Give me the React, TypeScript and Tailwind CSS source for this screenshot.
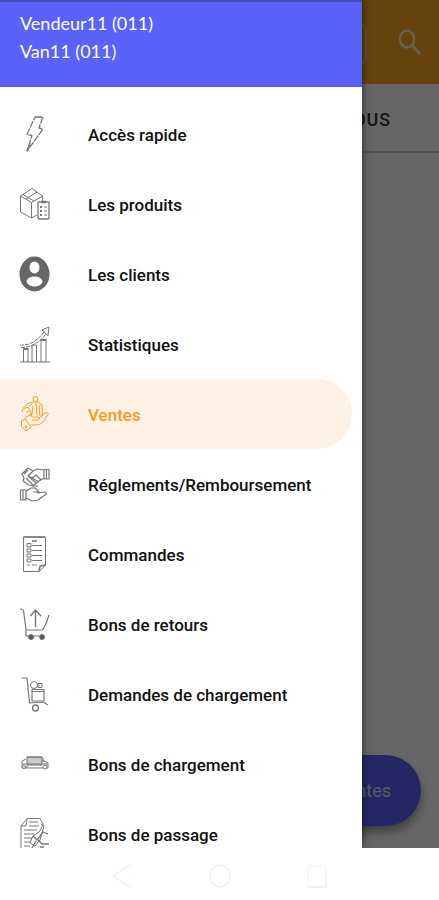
import type { ReactNode } from "react"

type IconProps = { children: ReactNode }

function Icon({ children }: IconProps) {
  return (
    <svg
      width="30"
      height="37"
      viewBox="0 0 30 37"
      fill="none"
      stroke="currentColor"
      strokeLinejoin="round"
      className="shrink-0 overflow-visible"
      aria-hidden="true"
    >
      {children}
    </svg>
  )
}

const BoltIcon = () => (
  <Icon>
    <path d="M15 1H23L19 12L23 13L7 35L12 19.500L7 18.500Z" strokeDasharray="7 1" strokeWidth="1.300" />
    <path d="M10 27L7 35L12 28" />
  </Icon>
)

const ProductIcon = () => (
  <Icon>
    <path d="M17 29L11.500 32L0.500 26V10L12 2.500L22.500 10V15M0.500 10L11.500 16.500L22.500 10M11.500 16.500V32M6 13L17 6M3 8.500L14 15" />
    <rect x="18" y="16" width="11" height="17" rx="1" strokeWidth="1.300" />
    <path d="M21 16H26" strokeWidth="2.500" />
    <path d="M20 21H22M20 25H22M20 29H22" strokeWidth="2" />
    <path d="M24 21H27M24 25H27M24 29H27" />
  </Icon>
)

const ClientIcon = () => (
  <Icon>
    <ellipse cx="14.500" cy="18" rx="15" ry="17.500" fill="#666" stroke="none" />
    <ellipse cx="14.500" cy="11.500" rx="5" ry="6" fill="#fff" stroke="none" />
    <path d="M6.500 26C6.500 18.500 22.500 18.500 22.500 26C20 32 9 32 6.500 26Z" fill="#fff" stroke="none" />
  </Icon>
)

const StatsIcon = () => (
  <Icon>
    <path d="M0 36H30M3.500 36V23H8V36M12 36V19H16.500V36M21 36V14H26V36" />
    <path d="M3 23H8.500M20.500 14H26.500" strokeWidth="2" />
    <path d="M0 19C10 20 18 14 24 6M1 21.500C11 22 20 16 26 8" strokeDasharray="4 1" />
    <path d="M22 4L29 1L28 10L25.500 7Z" />
  </Icon>
)

const SalesIcon = () => (
  <Icon>
    <circle cx="15.500" cy="3" r="2.500" />
    <path d="M2 16C3 11 7 7 13 6L18 6L22 9L22.500 20M4 13L7 11L10 13M9 10L12 8M13 10L12 18L8 20M16 7L17 19M19 9L20 20M6 17L10 14L12 20" />
    <path d="M1.500 25L5 23L11 31L6 35L1.500 30ZM5 23C7 19 11 19 13 21L18 21C20 22 19 24 17 24H12M18 23L25 17C28 16 29 18 27 20C25 25 21 29 16 29H11" />
    <circle cx="6" cy="31" r="1" />
  </Icon>
)

const PaymentIcon = () => (
  <Icon>
    <path d="M24 3.500H29V13H24ZM26.500 3.500V13M24 4L17 3L13 5L8 2L2 8L4 12L3 15L9 19L13 20L19 15L24 12M13 5L8 10L12 12L16 9L21 14M4 8L8 4M6 12L13 19M8 10L16 17M12 12L19 16" strokeWidth="1.200" />
    <path d="M0.500 24H6V34H0.500ZM3 24V34M6 25L11 22H15L19 26H13M17 27L25 26C27 27 27 28 25 29L18 34L12 35L6 32M12 20H18" strokeWidth="1.200" />
  </Icon>
)

const OrderIcon = () => (
  <Icon>
    <path d="M3.500 1H25.500V29L19 35.500H3.500Z" />
    <path d="M25.500 29L20 30L19 35.500M3.500 1H25" strokeWidth="1.500" />
    <path d="M12 5H17" strokeWidth="1.500" />
    <path d="M7 7.500H11V11H7ZM7 13H11V16H7ZM7 18H11V21H7ZM7 23H11V26H7Z" />
    <path d="M12 9.500H22M12 14.500H22M12 19.500H22M12 24.500H22M7 29H10M12 29H17" />
  </Icon>
)

const ReturnIcon = () => (
  <Icon>
    <path d="M0 3C3 3 3.500 4 4 8L6 24H22C25 22 26 18 29 9M6 24V30H19" strokeWidth="1.200" />
    <path d="M15.500 21V4M10.500 10L15.500 4L21 10" strokeWidth="1.400" />
    <circle cx="11" cy="31" r="2.500" fill="#555" />
    <circle cx="22" cy="31" r="2.500" fill="#555" />
  </Icon>
)

const LoadRequestIcon = () => (
  <Icon>
    <path d="M1.500 2H7L9.500 27L23 26L28 29" strokeWidth="1.200" />
    <path d="M12 13.500H24V25H12ZM12 15.500H24" strokeWidth="1.200" />
    <circle cx="14" cy="9" r="3.500" />
    <rect x="18" y="7.500" width="4" height="4" />
    <circle cx="15.500" cy="32" r="3" strokeWidth="1.300" />
  </Icon>
)

const TruckIcon = () => (
  <Icon>
    <path d="M7 11H22V19H7Z" fill="#ccc" />
    <path d="M7 11H22L24 15L28 17V22H2V15L6 13M2 18H28M7 19V22M21 15H25" />
    <circle cx="4" cy="21" r="1.500" fill="#fff" />
    <circle cx="25" cy="21" r="2" fill="#fff" />
  </Icon>
)

const PassageIcon = () => (
  <Icon>
    <path d="M1 35V10L7 2.500H20L23 8L20 15L13 20L10 27L15 30L20 24L24 10L21 8M1 10H6L7 3M9 6H18M9 10H19M4 14H17M4 18H14M4 22H12M4 26H10M4 30H10M5 34H11" />
    <path d="M13 20L17 24L23 16L28 18M16 25L12 32M18 24L22 28H29M20 31H24M19 34L27 36" strokeWidth="1.300" />
  </Icon>
)

const items = [
  { title: "Accès rapide", icon: <BoltIcon /> },
  { title: "Les produits", icon: <ProductIcon /> },
  { title: "Les clients", icon: <ClientIcon /> },
  { title: "Statistiques", icon: <StatsIcon /> },
  { title: "Ventes", icon: <SalesIcon />, active: true },
  { title: "Réglements/Remboursement", icon: <PaymentIcon /> },
  { title: "Commandes", icon: <OrderIcon /> },
  { title: "Bons de retours", icon: <ReturnIcon /> },
  { title: "Demandes de chargement", icon: <LoadRequestIcon /> },
  { title: "Bons de chargement", icon: <TruckIcon /> },
  { title: "Bons de passage", icon: <PassageIcon /> },
]

function SalesPage() {
  return (
    <div className="flex flex-col h-full bg-white">
      <header className="flex items-center justify-end gap-[30px] h-[84px] shrink-0 pt-1 pr-4 bg-[#ffa726] text-white/80">
        <button aria-label="Scanner" className="w-10 h-10 rounded-md border-2 border-white/40" />
        <button aria-label="Rechercher">
          <svg width="26" height="32" viewBox="0 0 26 32" fill="none" stroke="currentColor" strokeWidth="2.500">
            <ellipse cx="10" cy="11" rx="7" ry="8.500" />
            <path d="M15 17.500L23 26" strokeWidth="3" />
          </svg>
        </button>
      </header>
      <div className="flex items-center justify-end h-[69px] shrink-0 pt-1 pr-12 border-b-2 border-black/20 text-lg font-medium tracking-wider text-[#333]">
        <button>TOUS</button>
      </div>
      <div className="flex flex-1 items-end justify-end pr-[18px] pb-[22px]">
        <button className="h-[71px] px-[30px] rounded-full bg-[#5a62f9] text-white/80 text-lg shadow-[0_6px_10px_rgba(0,0,0,0.4)]">
          Ventes
        </button>
      </div>
    </div>
  )
}

function Drawer() {
  return (
    <aside className="absolute inset-y-0 left-0 w-[362px] max-w-[83%] overflow-hidden bg-white shadow-[0_0_8px_rgba(0,0,0,0.6)]">
      <div className="h-[87px] pl-5 pt-[7px] border-t-2 border-[#454bb8] bg-[#5a62f9] text-white text-lg leading-7 font-[Lato,sans-serif]">
        <p>Vendeur11 (011)</p>
        <p>Van11 (011)</p>
      </div>
      <nav className="pt-3 pr-[10px]">
        {items.map((item) => (
          <a
            key={item.title}
            href="#"
            className={
              item.active
                ? "flex items-center gap-[38px] h-[70px] pl-5 rounded-r-full bg-[#fff2e5] text-[#fb9a1c]"
                : "flex items-center gap-[38px] h-[70px] pl-5 text-[#777]"
            }
          >
            {item.icon}
            <span
              className={
                item.active
                  ? "pt-1 text-[17px] font-medium whitespace-nowrap"
                  : "pt-1 text-[17px] font-medium whitespace-nowrap text-[#111]"
              }
            >
              {item.title}
            </span>
          </a>
        ))}
      </nav>
    </aside>
  )
}

function SystemBar() {
  return (
    <div className="flex items-center justify-center gap-[76px] h-[52px] shrink-0 pt-1 bg-white text-[#f1f1f1]">
      <button aria-label="Retour">
        <svg width="22" height="28" viewBox="0 0 22 28" fill="none" stroke="currentColor" strokeWidth="1.500">
          <path d="M20 2L2 14L20 26" />
          <path d="M20 2V26" strokeWidth="0.500" />
        </svg>
      </button>
      <button aria-label="Accueil">
        <svg width="22" height="28" viewBox="0 0 22 28" fill="none" stroke="currentColor" strokeWidth="1.500">
          <ellipse cx="11" cy="14" rx="10" ry="11" />
        </svg>
      </button>
      <button aria-label="Applications récentes">
        <svg width="22" height="28" viewBox="0 0 22 28" fill="none" stroke="currentColor" strokeWidth="1.500">
          <rect x="1" y="4" width="18" height="21" rx="2" strokeWidth="1" />
          <path d="M1 25H20" />
        </svg>
      </button>
    </div>
  )
}

export default function App() {
  return (
    <div className="flex flex-col h-screen bg-white font-[Roboto,sans-serif]">
      <main className="relative flex-1 min-h-0 overflow-hidden">
        <SalesPage />
        <div className="absolute inset-0 bg-black/60" />
        <Drawer />
      </main>
      <SystemBar />
    </div>
  )
}
